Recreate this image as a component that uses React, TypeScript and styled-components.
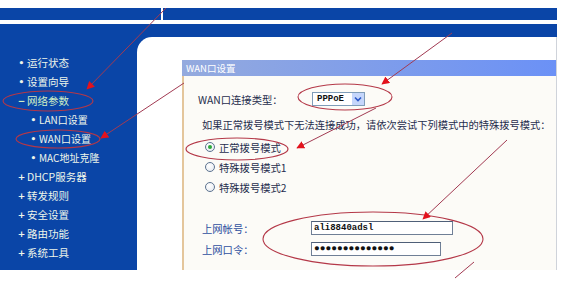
import React from 'react';
import styled, { createGlobalStyle } from 'styled-components';

// 全局样式
const GlobalStyle = createGlobalStyle`
  html, body { margin: 0; padding: 0; background: #fff; }
  body { font-family: "Noto Sans CJK SC", "DejaVu Sans", sans-serif; }
`;

const Page = styled.div`
  position: relative;
  width: 563px;
  height: 284px;
  overflow: hidden;
  background: #fff;
  padding-top: 8px;
  box-sizing: border-box;
`;

// 顶部蓝条
const TopBand = styled.div`
  display: flex;
  gap: 2px;
  width: 557px;
  height: 12px;
`;

const BandSegment = styled.div<{ $w?: number }>`
  background: #0a45a7;
  width: ${p => (p.$w ? `${p.$w}px` : 'auto')};
  flex: ${p => (p.$w ? 'none' : '1')};
`;

const Main = styled.div`
  display: grid;
  grid-template-columns: 137px 1fr;
  width: 557px;
  height: 246px;
  margin-top: 4px;
  padding-top: 13px;
  box-sizing: border-box;
  background: #0a45a7;
`;

// 左侧菜单
const Sidebar = styled.ul`
  list-style: none;
  margin: 0;
  padding: 16px 0 0 0;
`;

const MenuItem = styled.li<{ $level: number; $active?: boolean }>`
  display: flex;
  align-items: center;
  height: 19px;
  padding-left: ${p => (p.$level ? 28 : 16)}px;
  color: ${p => (p.$active ? '#cfeec4' : '#eef6ea')};
  font-size: ${p => (p.$level ? 10 : 10.5)}px;
  white-space: nowrap;
`;

const Mark = styled.span`
  width: 11px;
  text-align: center;
  font-family: "DejaVu Sans", sans-serif;
  font-weight: bold;
  font-size: 9px;
`;

// 右侧内容
const Content = styled.div`
  display: flex;
  flex-direction: column;
  background: #fff;
  border-top-left-radius: 15px;
  border-right: 1px solid #cfd3da;
  padding: 23px 0 0 45px;
  overflow: hidden;
`;

const Panel = styled.section`
  flex: 1;
  display: flex;
  flex-direction: column;
  min-width: 0;
`;

const PanelHeader = styled.div`
  height: 16px;
  line-height: 16px;
  padding-left: 4px;
  font-size: 9.5px;
  color: #fff;
  background: linear-gradient(to right, #94aade, #6b91f6);
`;

const PanelBody = styled.div`
  flex: 1;
  display: flex;
  flex-direction: column;
  border-left: 2px solid #e4c69c;
  background: #fcfbf7;
  padding-left: 14px;
  color: #1f2d4d;
  font-size: 10.3px;
  overflow: hidden;
`;

const FormRow = styled.div<{ $top: number }>`
  display: flex;
  align-items: center;
  height: 14px;
  margin-top: ${p => p.$top}px;
  white-space: nowrap;
`;

const Label = styled.span<{ $w: number; $blue?: boolean }>`
  width: ${p => p.$w}px;
  flex: none;
  padding-left: ${p => (p.$blue ? 4 : 0)}px;
  box-sizing: border-box;
  color: ${p => (p.$blue ? '#2f4f9f' : '#1f2d4d')};
`;

const Select = styled.div`
  display: flex;
  align-items: center;
  width: 53px;
  height: 14px;
  box-sizing: border-box;
  border: 1px solid #7f9db9;
  background: #fff;
`;

const SelectValue = styled.span`
  flex: 1;
  padding-left: 4px;
  font-family: "Liberation Mono", monospace;
  font-weight: bold;
  font-size: 9px;
  color: #111;
`;

const SelectButton = styled.span`
  display: flex;
  align-items: center;
  justify-content: center;
  width: 12px;
  height: 12px;
  background: #c5d6fb;
`;

const Hint = styled.div`
  margin-top: 12px;
  padding-left: 4px;
  height: 14px;
  line-height: 14px;
  font-size: 10.25px;
  white-space: nowrap;
`;

const RadioGroup = styled.div`
  display: flex;
  flex-direction: column;
  margin-top: 5px;
`;

const RadioRow = styled.label`
  display: flex;
  align-items: center;
  gap: 4px;
  height: 20px;
  padding-left: 7px;
`;

const Radio = styled.span<{ $checked?: boolean }>`
  position: relative;
  width: 10px;
  height: 10px;
  box-sizing: border-box;
  border-radius: 50%;
  border: 1px solid #5d7390;
  background: radial-gradient(circle at 40% 35%, #ffffff, #e3e8ef);
  &::after {
    content: '';
    display: ${p => (p.$checked ? 'block' : 'none')};
    position: absolute;
    left: 2px;
    top: 2px;
    width: 4px;
    height: 4px;
    border-radius: 50%;
    background: #2ca83a;
  }
`;

const Field = styled.div<{ $w: number }>`
  width: ${p => p.$w}px;
  height: 14px;
  box-sizing: border-box;
  border: 1px solid #6f7f96;
  border-top-color: #4f5f78;
  background: #fff;
  padding-left: 2px;
  line-height: 12px;
  font-family: "Liberation Mono", monospace;
  font-weight: bold;
  font-size: 9px;
  color: #111;
  overflow: hidden;
`;

const Dots = styled.span`
  font-size: 9.6px;
`;

// 红色标注
const Annotations = styled.svg`
  position: absolute;
  left: 0;
  top: 0;
  pointer-events: none;
`;

const menu = [
  { label: '运行状态', mark: '•', level: 0 },
  { label: '设置向导', mark: '•', level: 0 },
  { label: '网络参数', mark: '−', level: 0, active: true },
  { label: 'LAN口设置', mark: '•', level: 1 },
  { label: 'WAN口设置', mark: '•', level: 1 },
  { label: 'MAC地址克隆', mark: '•', level: 1 },
  { label: 'DHCP服务器', mark: '+', level: 0 },
  { label: '转发规则', mark: '+', level: 0 },
  { label: '安全设置', mark: '+', level: 0 },
  { label: '路由功能', mark: '+', level: 0 },
  { label: '系统工具', mark: '+', level: 0 },
];

const radios = [
  { label: '正常拨号模式', checked: true },
  { label: '特殊拨号模式1' },
  { label: '特殊拨号模式2' },
];

const arrows = [
  [166, 8, 87, 89],
  [184, 83, 101, 138],
  [452, 33, 382, 84],
  [376, 108, 297, 148],
  [507, 140, 423, 219],
];

const ellipses = [
  [48, 101, 45, 10],
  [58, 139, 42, 9],
  [345, 97, 47, 13],
  [237, 149, 51, 11],
  [373, 239, 110, 27],
];

const App = () => {
  return (
    <Page>
      <GlobalStyle />
      <TopBand>
        <BandSegment $w={161} />
        <BandSegment />
      </TopBand>
      <Main>
        <Sidebar>
          {menu.map(m => (
            <MenuItem key={m.label} $level={m.level} $active={m.active}>
              <Mark>{m.mark}</Mark>
              {m.label}
            </MenuItem>
          ))}
        </Sidebar>
        <Content>
          <Panel>
            <PanelHeader>WAN口设置</PanelHeader>
            <PanelBody>
              <FormRow $top={16}>
                <Label $w={114}>WAN口连接类型：</Label>
                <Select>
                  <SelectValue>PPPoE</SelectValue>
                  <SelectButton>
                    <svg width="8" height="6" viewBox="0 0 8 6">
                      <path d="M1 1.5 L4 4.5 L7 1.5" fill="none" stroke="#2a56c8" strokeWidth="1.6" />
                    </svg>
                  </SelectButton>
                </Select>
              </FormRow>
              <Hint>如果正常拨号模式下无法连接成功，请依次尝试下列模式中的特殊拨号模式：</Hint>
              <RadioGroup>
                {radios.map(r => (
                  <RadioRow key={r.label}>
                    <Radio $checked={r.checked} />
                    {r.label}
                  </RadioRow>
                ))}
              </RadioGroup>
              <FormRow $top={24}>
                <Label $w={113} $blue>上网帐号：</Label>
                <Field $w={142}>ali8840adsl</Field>
              </FormRow>
              <FormRow $top={7}>
                <Label $w={113} $blue>上网口令：</Label>
                <Field $w={130}>
                  <Dots>{'●'.repeat(14)}</Dots>
                </Field>
              </FormRow>
            </PanelBody>
          </Panel>
        </Content>
      </Main>

      <Annotations width="563" height="284" viewBox="0 0 563 284">
        <defs>
          <marker id="ah" viewBox="0 0 10 10" refX="9" refY="5" markerWidth="8" markerHeight="8"
            orient="auto" markerUnits="userSpaceOnUse">
            <path d="M0 0 L10 5 L0 10 z" fill="#e3121c" />
          </marker>
        </defs>
        {ellipses.map(([cx, cy, rx, ry], i) => (
          <ellipse key={i} cx={cx} cy={cy} rx={rx} ry={ry} fill="none" stroke="#b43848" strokeWidth="1.1" />
        ))}
        {arrows.map(([x1, y1, x2, y2], i) => (
          <line key={i} x1={x1} y1={y1} x2={x2} y2={y2} stroke="#a23a52" strokeWidth="1" markerEnd="url(#ah)" />
        ))}
        <line x1="455" y1="278" x2="474" y2="262" stroke="#a23a52" strokeWidth="1" />
      </Annotations>
    </Page>
  );
};

export default App;
